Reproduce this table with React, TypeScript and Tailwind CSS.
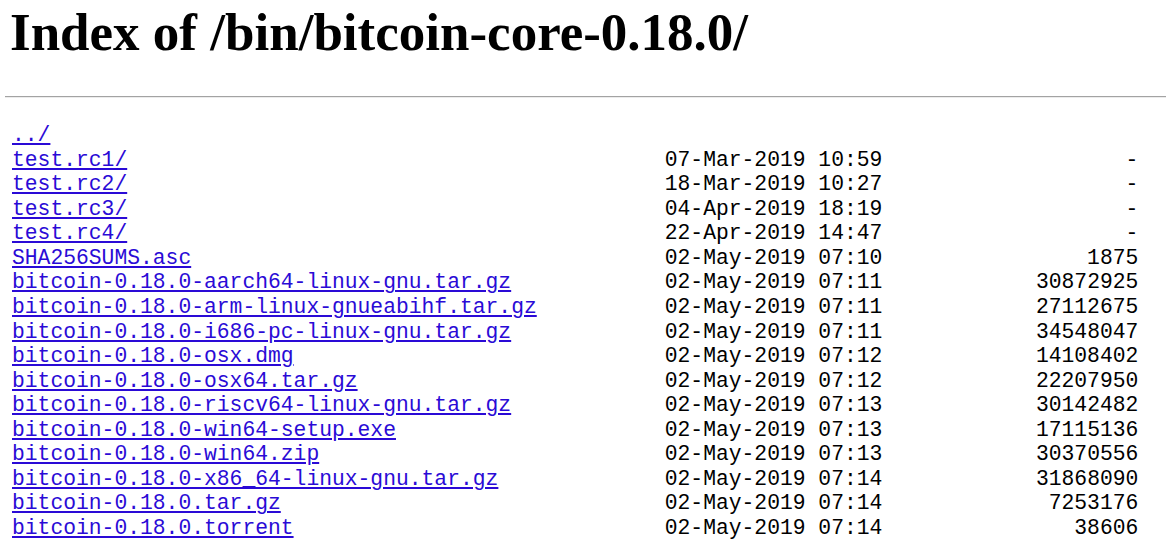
import React from "react";

const rows: [string, string, string][] = [
  ["test.rc1/", "07-Mar-2019 10:59", "-"],
  ["test.rc2/", "18-Mar-2019 10:27", "-"],
  ["test.rc3/", "04-Apr-2019 18:19", "-"],
  ["test.rc4/", "22-Apr-2019 14:47", "-"],
  ["SHA256SUMS.asc", "02-May-2019 07:10", "1875"],
  ["bitcoin-0.18.0-aarch64-linux-gnu.tar.gz", "02-May-2019 07:11", "30872925"],
  ["bitcoin-0.18.0-arm-linux-gnueabihf.tar.gz", "02-May-2019 07:11", "27112675"],
  ["bitcoin-0.18.0-i686-pc-linux-gnu.tar.gz", "02-May-2019 07:11", "34548047"],
  ["bitcoin-0.18.0-osx.dmg", "02-May-2019 07:12", "14108402"],
  ["bitcoin-0.18.0-osx64.tar.gz", "02-May-2019 07:12", "22207950"],
  ["bitcoin-0.18.0-riscv64-linux-gnu.tar.gz", "02-May-2019 07:13", "30142482"],
  ["bitcoin-0.18.0-win64-setup.exe", "02-May-2019 07:13", "17115136"],
  ["bitcoin-0.18.0-win64.zip", "02-May-2019 07:13", "30370556"],
  ["bitcoin-0.18.0-x86_64-linux-gnu.tar.gz", "02-May-2019 07:14", "31868090"],
  ["bitcoin-0.18.0.tar.gz", "02-May-2019 07:14", "7253176"],
  ["bitcoin-0.18.0.torrent", "02-May-2019 07:14", "38606"],
];

export default function App() {
  return (
    <div className="bg-white min-h-screen w-[1166px] h-[557px] overflow-hidden text-black">
      <h1
        className="pl-[10px] pt-[2px] text-[53px] font-bold leading-[60px]"
        style={{ fontFamily: '"Liberation Serif", "Times New Roman", serif' }}
      >
        Index of /bin/bitcoin-core-0.18.0/
      </h1>
      <div className="mt-[34px] ml-[5px] h-[2px] bg-[#a3a3a3] border-b border-[#ececec]" />
      <pre
        className="pl-[12px] mt-[25px] text-[21.33px] leading-[24.56px] whitespace-pre"
        style={{ fontFamily: '"Liberation Mono", "Courier New", monospace' }}
      >
        <a href="#" className="text-[#2a0ad6] underline">../</a>
        {"\n"}
        {rows.map(([name, date, size]) => (
          <React.Fragment key={name}>
            <a href="#" className="text-[#2a0ad6] underline">{name}</a>
            {" ".repeat(51 - name.length) + date + size.padStart(20, " ") + "\n"}
          </React.Fragment>
        ))}
      </pre>
    </div>
  );
}
